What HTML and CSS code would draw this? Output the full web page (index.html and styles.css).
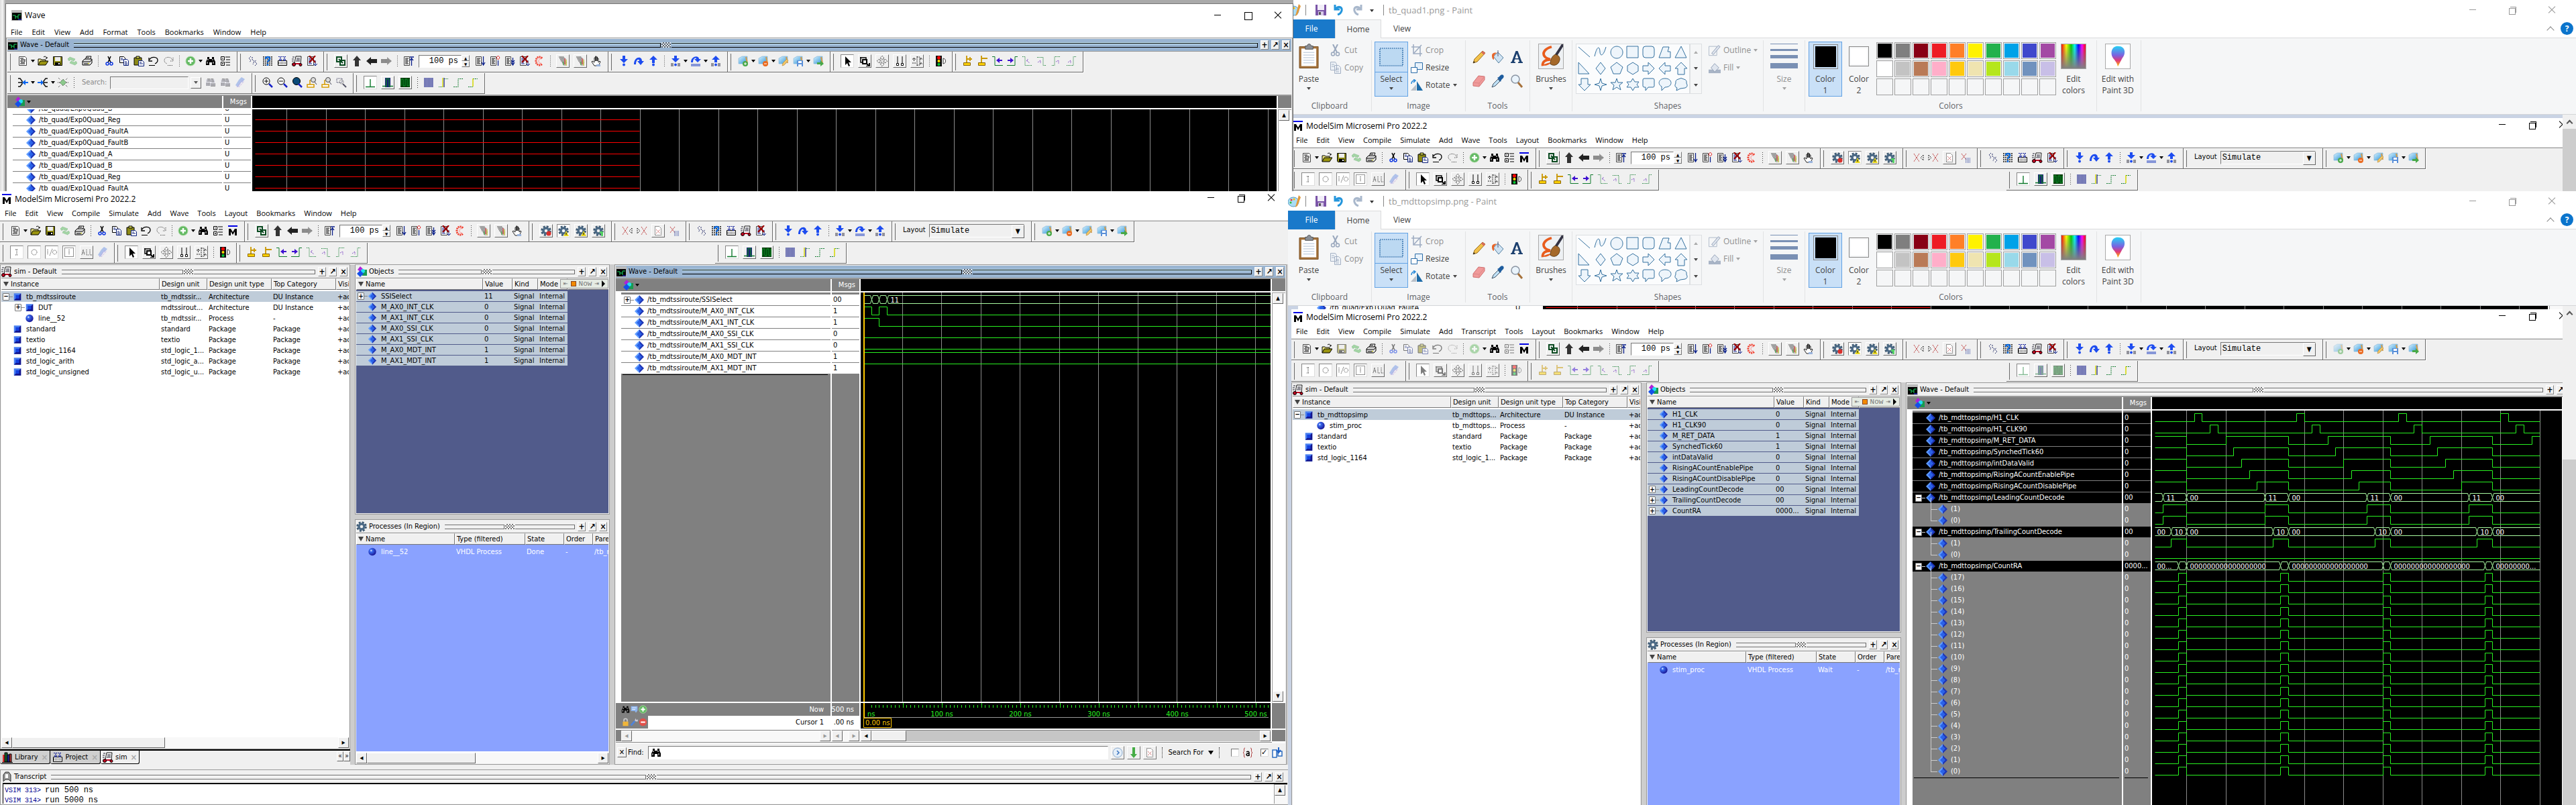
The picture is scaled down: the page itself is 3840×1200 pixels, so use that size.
FILE: index.html
```html
<!DOCTYPE html>
<html lang="en">
<head>
<meta charset="utf-8">
<title>Waveform desktop</title>
<link rel="stylesheet" href="styles.css">
</head>
<body>
<svg class="sprite" aria-hidden="true">
  <defs>
    <linearGradient id="glass" x1="0" y1="0" x2="1" y2="1"><stop offset="0" stop-color="#d8f2ff"/><stop offset="1" stop-color="#2d93d6"/></linearGradient>
    <linearGradient id="rainbow"><stop offset="0" stop-color="#f00"/><stop offset=".2" stop-color="#ff0"/><stop offset=".4" stop-color="#0c0"/><stop offset=".55" stop-color="#0ff"/><stop offset=".7" stop-color="#00f"/><stop offset=".85" stop-color="#f0f"/><stop offset="1" stop-color="#f00"/></linearGradient>
    <linearGradient id="fade" x1="0" y1="0" x2="0" y2="1"><stop offset="0" stop-color="#808080" stop-opacity="0"/><stop offset="1" stop-color="#808080"/></linearGradient>
    <linearGradient id="pin" x1="0" y1="0" x2="0" y2="1"><stop offset="0" stop-color="#25d2f5"/><stop offset=".45" stop-color="#7a62e0"/><stop offset=".7" stop-color="#e03a7a"/><stop offset="1" stop-color="#ffc400"/></linearGradient>
    <radialGradient id="orb" cx=".35" cy=".35" r=".65"><stop offset="0" stop-color="#fff"/><stop offset=".25" stop-color="#3a6cf0"/><stop offset="1" stop-color="#1b1b9a"/></radialGradient>
  </defs>
  <symbol id="i-new" viewBox="0 0 16 16"><path d="M2.5 1.5h9l2 2v11h-11z" fill="#fff" stroke="#444"/><path d="M4 4h5M5 6h7M4 8h4M9 8h3M5 10h6M4 12h7" stroke="#000"/></symbol>
  <symbol id="i-open" viewBox="0 0 16 16"><path d="M1 14V5h4l1 1h6v3" fill="#f8f088" stroke="#000"/><path d="M1 14l3-6h12l-4 6z" fill="#9a9410" stroke="#000"/><path d="M9 2c3-2 4 0 5 2m0-2v2h-2" fill="none" stroke="#000"/></symbol>
  <symbol id="i-save" viewBox="0 0 16 16"><path d="M1.500 1.500h13v13h-12l-1-1z" fill="#8d8a16" stroke="#000"/><path d="M4 2h8v6H4z" fill="#eee"/><path d="M4 10h8v4H4z" fill="#000"/><path d="M9 11h2v2H9z" fill="#fff"/></symbol>
  <symbol id="i-refresh" viewBox="0 0 16 16"><path d="M1 5l3-3 8 3-2 3-5-2-2 2zM15 11l-3 3-8-3 2-3 5 2 2-2z" fill="#a3d5a5" stroke="#7fb884" stroke-dasharray="1 1"/></symbol>
  <symbol id="i-print" viewBox="0 0 16 16"><path d="M5 6l2-5h7l-2 5z" fill="#fff" stroke="#000"/><path d="M1 8l3-3h11v6l-3 3H1z" fill="#ddd" stroke="#000"/><path d="M1 9h11l3-3M7 3h4M3 12h7" fill="none" stroke="#000"/><path d="M9 11h2v1H9z" fill="#dd0"/></symbol>
  <symbol id="i-cut" viewBox="0 0 16 16"><path d="M6 1l4 9M10 1L6 10" stroke="#000" stroke-width="1.500"/><circle cx="5" cy="12" r="2" fill="none" stroke="#0b35e0" stroke-width="1.500"/><circle cx="11" cy="12" r="2" fill="none" stroke="#0b35e0" stroke-width="1.500"/></symbol>
  <symbol id="i-copy" viewBox="0 0 16 16"><path d="M1.500 1.500h6l2 2v7h-8z" fill="#fff" stroke="#000"/><path d="M7.500 5.500h5l2 2v7h-7z" fill="#fff" stroke="#0a1f7a"/><path d="M3 4h3M3 6h4M9 9h3M9 11h4M9 13h4" stroke="#0a1f7a"/></symbol>
  <symbol id="i-paste" viewBox="0 0 16 16"><path d="M1 3h11v11H1z" fill="#8d8a16" stroke="#000"/><path d="M4 1h5v3H4z" fill="#dd5" stroke="#000"/><path d="M7.500 7.500h6l2 2v6h-8z" fill="#fff" stroke="#0a1f7a"/><path d="M9 10h3M9 12h5" stroke="#0a1f7a"/></symbol>
  <symbol id="i-undo" viewBox="0 0 16 16"><path d="M2 6c2-5 12-5 12 1 0 3-2 4-4 5M1 3v5h5" fill="none" stroke="#000" stroke-width="1.300"/><path d="M1 14.500h9" stroke="#000"/></symbol>
  <symbol id="i-redo" viewBox="0 0 16 16"><path d="M14 6C12 1 2 1 2 7c0 3 2 4 4 5M15 3v5h-5M7 14.500h8" fill="none" stroke="#444" stroke-dasharray="1 1"/></symbol>
  <symbol id="i-plus" viewBox="0 0 16 16"><circle cx="8" cy="8" r="7" fill="#63b963" stroke="#a8d8a0"/><path d="M8 4v8M4 8h8" stroke="#fff" stroke-width="2.500"/></symbol>
  <symbol id="i-find" viewBox="0 0 16 16"><path d="M3 2h3v3h4V2h3v3l2 4v5h-5v-4H6v4H1V9l2-4z" fill="#000"/><path d="M4 5v2M11 5v2M3 9v3M12 9v3" stroke="#fff"/></symbol>
  <symbol id="i-tree" viewBox="0 0 16 16"><path d="M1.500 1.500h5v5h-5zM1.500 9.500h5v5h-5z" fill="#fff" stroke="#000"/><path d="M3 4h2M3 12h2M4 11v2M8 2h7M9 6h6M8 10h7M9 14h6" stroke="#000"/></symbol>
  <symbol id="i-m" viewBox="0 0 16 16"><path d="M1 0h14v2H1z" fill="#0000e6"/><path d="M2 15V5h3l3 5 3-5h3v10h-3V9l-3 5-3-5v6z" fill="#000"/></symbol>
  <symbol id="i-link" viewBox="0 0 16 16"><path d="M2 2h7v7H2zM7 7h7v7H7z" fill="none" stroke="#0a4a20" stroke-width="2"/><path d="M5 5l6 6" stroke="#0a4a20" stroke-width="2"/></symbol>
  <symbol id="i-up" viewBox="0 0 16 16"><path d="M8 0l6 7h-3v9H5V7H2z" fill="#333"/></symbol>
  <symbol id="i-left" viewBox="0 0 16 16"><path d="M0 8l7-6v3h9v6H7v3z" fill="#222"/></symbol>
  <symbol id="i-right" viewBox="0 0 16 16"><path d="M16 8L9 2v3H0v6h9v3z" fill="#999"/><path d="M0 6h12M0 8h15M0 10h12" stroke="#666" stroke-dasharray="1 1"/></symbol>
  <symbol id="i-restart" viewBox="0 0 16 16"><path d="M1.500 1.500h8v13h-8z" fill="#fff" stroke="#444"/><path d="M3 4h5M3 6h4M3 8h5M3 10h4M3 12h5" stroke="#000"/><path d="M12.500 15V3M10 2h6M10 7l2.500-3L15 7" fill="none" stroke="#0a1f8a" stroke-width="1.300"/></symbol>
  <symbol id="i-run" viewBox="0 0 16 16"><path d="M1.500 1.500h8v13h-8z" fill="#fff" stroke="#444"/><path d="M3 4h5M3 6h4M3 8h5M3 10h4M3 12h5" stroke="#000"/><path d="M12.500 1v12M10 10l2.500 4L15 10" fill="none" stroke="#0a1f8a" stroke-width="1.300"/></symbol>
  <symbol id="i-cont" viewBox="0 0 16 16"><path d="M1.500 1.500h8v13h-8z" fill="#fff" stroke="#444"/><path d="M3 4h5M3 6h4M3 8h5M3 10h4M3 12h5" stroke="#000"/><path d="M12.500 15V7" stroke="#0a1f8a" stroke-width="1.300"/><path d="M12.500 0l2.500 3-2.500 3L10 3z" fill="#fff" stroke="#d22"/></symbol>
  <symbol id="i-runall" viewBox="0 0 16 16"><path d="M1.500 1.500h8v13h-8z" fill="#fff" stroke="#444"/><path d="M3 4h5M3 6h4M3 8h5M3 10h4M3 12h5" stroke="#000"/><path d="M12.500 3v10M10 7l2.500 3L15 7M10 10l2.500 4L15 10" fill="none" stroke="#0a1f8a" stroke-width="1.300"/></symbol>
  <symbol id="i-break" viewBox="0 0 16 16"><path d="M1.500 1.500h9v13h-9z" fill="#fff" stroke="#444"/><path d="M3 4h5M3 6h4M3 8h5M3 10h4M3 12h5M13 7v8M10 12l3 3 3-3" fill="none" stroke="#0a1f8a"/><path d="M4 0l9 10M13 0L4 10" stroke="#900" stroke-width="2.200"/></symbol>
  <symbol id="i-stop" viewBox="0 0 16 16"><path d="M12 4c-3-4-9-2-9 4s6 8 9 4" fill="none" stroke="#f04030" stroke-width="3" stroke-dasharray="2 1"/><path d="M11 5c-3-1-4 1-4 3s1 4 4 3" fill="none" stroke="#f88"/></symbol>
  <symbol id="i-perf" viewBox="0 0 16 16"><path d="M2 1h7l5 5v9H9z" fill="#bbb"/><path d="M2 2h7M3 4h7M4 6h8M5 8h8M7 10h7M8 12h6" stroke="#555" stroke-dasharray="1 1"/><path d="M11 4v9" stroke="#e33"/><path d="M13 6v9" stroke="#dd2"/><path d="M9 9v5" stroke="#3a3"/></symbol>
  <symbol id="i-hand" viewBox="0 0 16 16"><path d="M5 15l-4-6 1-1 3 2V3h1.500v5V1H8v7-6h1.500v6V4H11v6l2-2 1 1-3 6z" fill="#fff" stroke="#222"/><path d="M8 13h6v3H8z" fill="#9ab4dd"/></symbol>
  <symbol id="i-gear" viewBox="0 0 16 16"><circle cx="8" cy="8" r="6" fill="none" stroke="#3d5871" stroke-width="3.600" stroke-dasharray="2.700 2"/><circle cx="8" cy="8" r="4" fill="none" stroke="#4c6a86" stroke-width="3.500"/></symbol>
  <symbol id="i-gearred" viewBox="0 0 16 16"><use href="#i-gear"/><circle cx="12" cy="12" r="3.500" fill="#d9302c"/></symbol>
  <symbol id="i-gearyellow" viewBox="0 0 16 16"><use href="#i-gear"/><path d="M12 8l4 8H8z" fill="#e8d820"/><path d="M12 11v3" stroke="#000"/></symbol>
  <symbol id="i-geargreen" viewBox="0 0 16 16"><use href="#i-gear"/><path d="M10 9h5v3h-5zM12 12h3v4h-3z" fill="#55d065"/></symbol>
  <symbol id="i-xleft" viewBox="0 0 16 16"><path d="M1 2l8 12M9 2L1 14" stroke="#b33" stroke-dasharray="2 1"/><path d="M15 4v8l-4-4z" fill="none" stroke="#333" stroke-dasharray="2 1"/></symbol>
  <symbol id="i-xright" viewBox="0 0 16 16"><path d="M7 2l8 12M15 2L7 14" stroke="#b33" stroke-dasharray="2 1"/><path d="M1 4v8l4-4z" fill="none" stroke="#333" stroke-dasharray="2 1"/></symbol>
  <symbol id="i-report" viewBox="0 0 16 16"><path d="M3.500 1.500h6l3 3v10h-9z" fill="#fff" stroke="#333" stroke-dasharray="1 1"/><path d="M5 6l3 3 3-3M5 12l3-3 3 3" fill="none" stroke="#b33" stroke-dasharray="1 1"/></symbol>
  <symbol id="i-xgrid" viewBox="0 0 16 16"><path d="M2 2l7 9M9 2l-7 9" stroke="#b33" stroke-dasharray="2 1"/><path d="M8 9h7M8 11h7M8 13h7M8 15h7" stroke="#223a9a" stroke-dasharray="1 1"/></symbol>
  <symbol id="i-compile" viewBox="0 0 16 16"><path d="M5 1L2 4l3 3-2 3M11 15l3-3-3-3 2-3M7 2v4l3 2-2 5" fill="none" stroke="#222a66" stroke-dasharray="2 1"/></symbol>
  <symbol id="i-help" viewBox="0 0 16 16"><path d="M1 2h14M1 5h14M1 8h14M1 11h14M1 14h14" stroke="#111" stroke-dasharray="2 1" stroke-width="1.500"/><path d="M5 5c0-4 7-4 6 0-.5 2-3 2-3 5M8 12v3" fill="none" stroke="#0b66d8" stroke-width="2.500"/></symbol>
  <symbol id="i-project" viewBox="0 0 16 16"><path d="M1.500 7.500h13v7h-13z" fill="#fff" stroke="#000"/><path d="M2 10h12M2 12h12" stroke="#000" stroke-dasharray="1 1"/><path d="M2 1.500h12" stroke="#12209a" stroke-dasharray="2 1"/><path d="M5 2v6M3 5l2 3 2-3M11 2v6M9 5l2 3 2-3" fill="none" stroke="#12209a"/></symbol>
  <symbol id="i-sim" viewBox="0 0 16 16"><path d="M6 1h8l-1 11H4l1-6z" fill="#fff" stroke="#111"/><path d="M7 4h5M7 6h5M6 8h6M1 2h3M0 5h3M0 8h3" stroke="#223" /><path d="M4 12h9" stroke="#c00020" stroke-width="2"/><circle cx="3" cy="13" r="2.500" fill="#c00020" stroke="#000"/><circle cx="13" cy="13.500" r="2" fill="#c00020" stroke="#000"/></symbol>
  <symbol id="i-bdown" viewBox="0 0 16 16"><path d="M6 0h4v5h4l-6 6-6-6h4z" fill="#1d4cf0"/><circle cx="8" cy="13.500" r="2" fill="#1d4cf0"/></symbol>
  <symbol id="i-bover" viewBox="0 0 16 16"><path d="M1 13C1 1 13 0 13 8h3l-5 6-5-6h3c0-4-5-3-5 5z" fill="#1d4cf0"/></symbol>
  <symbol id="i-bup" viewBox="0 0 16 16"><path d="M6 11h4V6h4L8 0 2 6h4z" fill="#1d4cf0"/><circle cx="8" cy="13.500" r="2" fill="#1d4cf0"/></symbol>
  <symbol id="i-cdown" viewBox="0 0 16 16"><path d="M6 0h4v4h4L8 10 2 4h4z" fill="#1d4cf0"/><path d="M2 11v5M4 11v5M12 11v5M14 11v5" stroke="#334"/><circle cx="8" cy="13.500" r="2" fill="#1d4cf0"/></symbol>
  <symbol id="i-cover" viewBox="0 0 16 16"><path d="M1 10C1 0 13-1 13 5h3l-5 5-5-5h3c0-3-5-2-5 5z" fill="#1d4cf0"/><path d="M2 12v4M4 12v4M6 12v4M8 12v4M10 12v4M12 12v4M14 12v4" stroke="#1d3cc0"/></symbol>
  <symbol id="i-cup" viewBox="0 0 16 16"><path d="M6 10h4V6h4L8 0 2 6h4z" fill="#1d4cf0"/><path d="M2 11v5M4 11v5M12 11v5M14 11v5" stroke="#334"/><circle cx="8" cy="13.500" r="2" fill="#1d4cf0"/></symbol>
  <symbol id="i-boxes" viewBox="0 0 16 16"><path d="M1 4l5-3h8v7l-3 4H1z" fill="url(#glass)" stroke="#7fb4d8" stroke-width=".6"/><path d="M12 2l2 9" stroke="#d59b4a" stroke-width="2"/></symbol>
  <symbol id="i-vadd" viewBox="0 0 16 16"><use href="#i-boxes"/><circle cx="11" cy="12" r="4" fill="#4aa84a"/><path d="M11 10v4M9 12h4" stroke="#fff"/></symbol>
  <symbol id="i-vdel" viewBox="0 0 16 16"><use href="#i-boxes"/><circle cx="11" cy="12" r="4" fill="#ea6a20"/><path d="M9 12h4" stroke="#fff"/></symbol>
  <symbol id="i-vedit" viewBox="0 0 16 16"><use href="#i-boxes"/><path d="M6 15l1-4 6-6 2 2-6 7z" fill="#f3c669" stroke="#b5842c" stroke-width=".6"/></symbol>
  <symbol id="i-vsave" viewBox="0 0 16 16"><use href="#i-boxes"/><path d="M6 7h9v9H6z" fill="#5a8fd8"/><path d="M8 8h5v3H8zM8 13h5v3H8z" fill="#fff"/></symbol>
  <symbol id="i-vgo" viewBox="0 0 16 16"><use href="#i-boxes"/><path d="M6 10h5V7l5 5-5 4v-3H6z" fill="#47a847"/></symbol>
  <symbol id="i-in" viewBox="0 0 16 16"><path d="M6 4h4M8 4v8M6 12h4" stroke="#333" stroke-dasharray="1 1" fill="none"/></symbol>
  <symbol id="i-out" viewBox="0 0 16 16"><circle cx="8" cy="8" r="4" fill="none" stroke="#333" stroke-dasharray="1 1"/></symbol>
  <symbol id="i-io" viewBox="0 0 16 16"><path d="M2 4v8M9 3l-4 10" stroke="#333" stroke-dasharray="1 1"/><circle cx="12.500" cy="8" r="3" fill="none" stroke="#333" stroke-dasharray="1 1"/></symbol>
  <symbol id="i-int" viewBox="0 0 16 16"><path d="M1.500 1.500h13v13h-13zM8 4v8" fill="none" stroke="#222" stroke-dasharray="1 1"/></symbol>
  <symbol id="i-all" viewBox="0 0 16 16"><path d="M1 12l2-8 2 8M2 9h3M8 4v8h3M13 4v8h3" fill="none" stroke="#333" stroke-dasharray="1 1"/></symbol>
  <symbol id="i-clean" viewBox="0 0 16 16"><path d="M1 12l5-8 4 3-5 8zM6 4l4-4 5 3-4 5" fill="#9fb6e8" opacity=".8"/><path d="M3 15l9-11M6 15l8-9" stroke="#c39ae0" stroke-dasharray="1 1"/></symbol>
  <symbol id="i-arrow" viewBox="0 0 16 16"><path d="M5 1v13l3-3 2 5 2-1-2-5h4z" fill="#000"/></symbol>
  <symbol id="i-zoommode" viewBox="0 0 16 16"><path d="M1 3h9v2M2 2v8h2" fill="none" stroke="#000" stroke-width="1.500"/><path d="M5 6h6v6H5zM10 11l5 5M15 11v5h-5" fill="none" stroke="#000" stroke-width="2"/></symbol>
  <symbol id="i-pan" viewBox="0 0 16 16"><path d="M8 0l3 4H9v3h3V5l4 3-4 3V9H9v3h2l-3 4-3-4h2V9H4v2L0 8l4-3v2h3V4H5z" fill="#fff" stroke="#222" stroke-dasharray="1 1"/></symbol>
  <symbol id="i-twocur" viewBox="0 0 16 16"><path d="M5 1v10M12 1v10" stroke="#000"/><path d="M3.500 11.500h3v3h-3zM10.500 11.500h3v3h-3z" fill="#fff" stroke="#000"/></symbol>
  <symbol id="i-edit" viewBox="0 0 16 16"><path d="M1 5h5M3.500 3v5M1 11h5M8 1v14M8 2h4v12H8M14 3v3M12 5h4M14 10v3M12 12h4" stroke="#222" fill="none" stroke-dasharray="2 1"/></symbol>
  <symbol id="i-traffic" viewBox="0 0 16 16"><path d="M1 0h9v16H1z" fill="#111"/><circle cx="5.500" cy="3" r="2.500" fill="#f00"/><circle cx="5.500" cy="8" r="2" fill="#fd0"/><circle cx="5.500" cy="13" r="2" fill="#0c3"/><path d="M12 4v8c5-1 5-7 0-8z" fill="#fff" stroke="#333"/></symbol>
  <symbol id="i-curadd" viewBox="0 0 16 16"><path d="M6 0v11M6 5h8M11 2v6" stroke="#c99700" stroke-width="1.800"/><path d="M1.500 10.500h10v4h-10z" fill="#fbd000" stroke="#8a6500"/></symbol>
  <symbol id="i-curdel" viewBox="0 0 16 16"><path d="M6 0v11M6 4h9" stroke="#c99700" stroke-width="1.800"/><path d="M1.500 10.500h10v4h-10z" fill="#fbd000" stroke="#8a6500"/></symbol>
  <symbol id="i-prev" viewBox="0 0 16 16"><path d="M0 1.500h4v13h12" fill="none" stroke="#107a2e"/><path d="M6 7l5-4v3h4v2h-4v3z" fill="#3d0fd0"/></symbol>
  <symbol id="i-next" viewBox="0 0 16 16"><path d="M0 14.500h12v-13h4" fill="none" stroke="#107a2e"/><path d="M10 7L5 3v3H1v2h4v3z" fill="#3d0fd0"/></symbol>
  <symbol id="i-fallp" viewBox="0 0 16 16"><path d="M1 1.500h4v13h10" fill="none" stroke="#107a2e" stroke-dasharray="1 1"/><path d="M7 7l5 4M9 5l-1 4" stroke="#62b" stroke-dasharray="1 1"/></symbol>
  <symbol id="i-falln" viewBox="0 0 16 16"><path d="M1 2.500h9v12h5" fill="none" stroke="#107a2e" stroke-dasharray="1 1"/><path d="M2 10l4-3v5" stroke="#62b" fill="none" stroke-dasharray="1 1"/></symbol>
  <symbol id="i-risep" viewBox="0 0 16 16"><path d="M1 14.500h4v-13h9" fill="none" stroke="#107a2e" stroke-dasharray="1 1"/><path d="M7 9l4-2v5" stroke="#62b" fill="none" stroke-dasharray="1 1"/></symbol>
  <symbol id="i-risen" viewBox="0 0 16 16"><path d="M1 14.500h10v-13h4" fill="none" stroke="#107a2e" stroke-dasharray="1 1"/><path d="M3 10l4-3v5" stroke="#62b" fill="none" stroke-dasharray="1 1"/></symbol>
  <symbol id="i-w1" viewBox="0 0 16 16"><path d="M1 14.500h14M8 14V3" stroke="#107a2e" stroke-width="1.400"/></symbol>
  <symbol id="i-w2" viewBox="0 0 16 16"><path d="M4 1h8v14H4z" fill="#182078"/><path d="M0 13.500h6v-11h4v11h6" fill="none" stroke="#107a2e" stroke-width="1.400"/></symbol>
  <symbol id="i-w3" viewBox="0 0 16 16"><path d="M1 1h14v14H1z" fill="#023d0a"/><path d="M2 13V3h3v10h3V3h3v10h3V3" fill="none" stroke="#0a9a2a"/></symbol>
  <symbol id="i-w4" viewBox="0 0 16 16"><path d="M1 1h14v14H1z" fill="#8c90c4"/><path d="M1 2h14M1 4h14M1 6h14M1 8h14M1 10h14M1 12h14M1 14h14" stroke="#3d4292" stroke-dasharray="1 1"/></symbol>
  <symbol id="i-w5" viewBox="0 0 16 16"><path d="M1 14.500h5M10 2.500h5" stroke="#107a2e" stroke-dasharray="1 1"/><path d="M6 1h2v14H6z" fill="#dfe048"/><path d="M8 1h2v14H8z" fill="#6a70b0"/></symbol>
  <symbol id="i-w6" viewBox="0 0 16 16"><path d="M1 14.500h7v-12h7" fill="none" stroke="#107a2e" stroke-dasharray="2 1"/></symbol>
  <symbol id="i-w7" viewBox="0 0 16 16"><path d="M1 14.500h7M8 2.500h7" stroke="#107a2e" stroke-dasharray="2 1"/><path d="M8 2v12" stroke="#d6d800" stroke-width="1.500"/></symbol>
  <symbol id="i-drv" viewBox="0 0 16 16"><path d="M1 2h3l3 4v4l-3 4H1M1 8h6" fill="none" stroke="#111" stroke-width="1.500"/><path d="M7 8l5-4v3h4v2h-4v3z" fill="#0b66f0"/></symbol>
  <symbol id="i-rdr" viewBox="0 0 16 16"><path d="M15 2h-3L9 6v4l3 4h3M9 8h6" fill="none" stroke="#111" stroke-width="1.500"/><path d="M9 8L5 4v3H0v2h5v3z" fill="#0b66f0"/></symbol>
  <symbol id="i-expand" viewBox="0 0 16 16"><path d="M8 3l5 5-5 5-5-5z" fill="#8cc98c" stroke="#444" stroke-dasharray="1 1"/><path d="M1 1l3 3M12 4l3-3M1 15l3-3M12 12l3 3M0 8h3M13 8h3" stroke="#333" stroke-dasharray="1 1"/></symbol>
  <symbol id="i-findgray" viewBox="0 0 16 16"><path d="M3 2h4l2 5H2zM8 2h4l2 6H9zM1 8h6v5H1zM8 9h7v5H8z" fill="#9a9a9a"/><path d="M1 4h14M1 6h14M1 8h14M1 10h14M1 12h14" stroke="#dcdcf4" stroke-dasharray="1 1"/></symbol>
  <symbol id="i-zin" viewBox="0 0 16 16"><circle cx="6" cy="6" r="5" fill="#fff" stroke="#000"/><path d="M6 3v6M3 6h6" stroke="#000"/><path d="M10 10l5 5" stroke="#1722c8" stroke-width="2.500"/></symbol>
  <symbol id="i-zout" viewBox="0 0 16 16"><circle cx="6" cy="6" r="5" fill="#fff" stroke="#000"/><path d="M3 6h6" stroke="#000"/><path d="M10 10l5 5" stroke="#1722c8" stroke-width="2.500"/></symbol>
  <symbol id="i-zfull" viewBox="0 0 16 16"><circle cx="7" cy="6" r="5.500" fill="#0b4a78" stroke="#000"/><path d="M10 10l5 5" stroke="#1722c8" stroke-width="2.500"/></symbol>
  <symbol id="i-zcur" viewBox="0 0 16 16"><circle cx="10" cy="4" r="3.500" fill="#ddd" stroke="#444"/><path d="M12 7l3 4" stroke="#445"/><path d="M5 4v8" stroke="#d59a00" stroke-width="1.500"/><path d="M1 11h10v4H1z" fill="#fff" stroke="#d59a00" stroke-width="1.500"/></symbol>
  <symbol id="i-zsel" viewBox="0 0 16 16"><path d="M1 2h8v6H1z" fill="none" stroke="#335" stroke-dasharray="1 1"/><circle cx="8" cy="7" r="3" fill="none" stroke="#444" stroke-dasharray="1 1"/><path d="M10 10l5 5" stroke="#556" stroke-width="2"/></symbol>
  <symbol id="i-wave" viewBox="0 0 16 16"><path d="M0 0h16v16H0z" fill="#bbb"/><path d="M1 4h14v11H1z" fill="#000"/><path d="M2 8h4v5M10 13V7h4M6 10h4" stroke="#18d860" fill="none"/><path d="M10 14h5" stroke="#33f"/></symbol>
  <symbol id="i-objects" viewBox="0 0 16 16"><path d="M6 0l6 6-6 2-4-3z" fill="#b020d8"/><path d="M9 5h7v9H9z" fill="#1a9a50"/><circle cx="10" cy="7" r="3" fill="#20e0f0"/><path d="M6 6l5 5-5 5-5-5z" fill="#1450e8"/></symbol>
  <symbol id="i-sig" viewBox="0 0 16 16"><path d="M8 1v14L1 8z" fill="#5e9bff"/><path d="M8 1v14l7-7z" fill="#1e34b4"/><path d="M8 4l4 4-4 4-4-4z" fill="#2a62e8"/></symbol>
  <symbol id="i-du" viewBox="0 0 16 16"><path d="M2 2h12v12H2z" fill="#4a80f0"/><path d="M14 2v12H2z" fill="#14148a"/><path d="M5 5h6v6H5z" fill="#1440e0"/></symbol>
  <symbol id="i-proc" viewBox="0 0 16 16"><circle cx="8" cy="8" r="6.500" fill="url(#orb)"/></symbol>
  <symbol id="i-lib" viewBox="0 0 16 16"><path d="M1 4h3v11H1z" fill="#d33"/><path d="M4 1h4v14H4z" fill="#155a2a" stroke="#000"/><path d="M8 4h3v11H8z" fill="#22a" stroke="#000"/><path d="M11 3h3v12h-3z" fill="#a33" stroke="#000"/><path d="M0 15.500h16" stroke="#000"/></symbol>
  <symbol id="i-trans" viewBox="0 0 16 16"><path d="M3 15V5l3-4h5l3 4v10l-3-3H6z" fill="#999" stroke="#333"/><path d="M6 4h4v6H6z" fill="#fff"/></symbol>
  <symbol id="i-lock" viewBox="0 0 16 16"><path d="M5 7V4c0-3 6-3 6 0v3" fill="none" stroke="#ccc" stroke-width="2"/><path d="M3 7h10v8H3z" fill="#f0b63a"/></symbol>
  <symbol id="i-wrench" viewBox="0 0 16 16"><path d="M2 14l7-8" stroke="#4f83d8" stroke-width="3.500"/><path d="M9 6l1-5 2 3 3-1-1 4z" fill="#ccd"/></symbol>
  <symbol id="i-minus" viewBox="0 0 16 16"><circle cx="8" cy="8" r="7" fill="#e2504a"/><path d="M4 8h8" stroke="#fff" stroke-width="2.500"/></symbol>
  <symbol id="i-note" viewBox="0 0 16 16"><path d="M2 2h12v8l-3 4-2-3H2z" fill="#8fb6ee"/><path d="M4 5h8M4 8h6" stroke="#fff"/></symbol>
  <symbol id="i-godown" viewBox="0 0 16 16"><path d="M6 0h4v10h3l-5 6-5-6h3z" fill="#45ac45"/></symbol>
  <symbol id="i-disc" viewBox="0 0 16 16"><circle cx="8" cy="8" r="7" fill="#e4eef8" stroke="#88a8cc"/><path d="M7 5l3 3-3 3" fill="none" stroke="#3b74c0" stroke-width="1.500"/></symbol>
  <symbol id="i-case" viewBox="0 0 16 16"><path d="M4 1C1 1 4 7 1 8c3 1 0 7 3 7M12 1c3 0 0 6 3 7-3 1 0 7-3 7" fill="none" stroke="#a33"/><path d="M6 7c3-2 4 0 4 1v5M10 9c-3 0-4 1-4 2s3 3 4 0" fill="none" stroke="#000" stroke-width="1.500"/></symbol>
  <symbol id="i-wrap" viewBox="0 0 16 16"><path d="M1 4h6v11H1zM9 6h6v7H9z" fill="#fff" stroke="#2d6cc0" stroke-width="1.500"/><path d="M10 0v6M7 4l3 4 3-4" fill="none" stroke="#1d62c8" stroke-width="2"/></symbol>
  <symbol id="i-palette" viewBox="0 0 20 20"><ellipse cx="8" cy="11" rx="8" ry="7" fill="#a9dcf5" stroke="#5a9cc4"/><circle cx="5" cy="8" r="1.500" fill="#e33"/><circle cx="9" cy="7" r="1.500" fill="#fb0"/><circle cx="4" cy="12" r="1.500" fill="#3b3"/><path d="M16 1l3 3-5 13-3 2 1-4z" fill="#e29a3c"/></symbol>
  <symbol id="i-psave" viewBox="0 0 16 16"><path d="M0 0h16v16H0z" fill="#7b55a8"/><path d="M3 0h10v8H3z" fill="#f2eef8"/><path d="M4 10h8v6H4z" fill="#d8cce8"/><path d="M5 11h3v4H5z" fill="#555"/></symbol>
  <symbol id="i-pundo" viewBox="0 0 16 16"><path d="M2 0v7h7M3 6c5-5 10-2 9 3-1 3-3 5-6 6" fill="none" stroke="#2496dc" stroke-width="3"/></symbol>
  <symbol id="i-predo" viewBox="0 0 16 16"><path d="M14 0v7H7M13 6C8 1 3 4 4 9c1 3 3 5 6 6" fill="none" stroke="#a9b8cc" stroke-width="3"/></symbol>
  <symbol id="i-clipboard" viewBox="0 0 32 38"><path d="M1 4h29v33H1z" fill="#a3713a" stroke="#7d5426"/><path d="M4 7h23v27H4z" fill="#fff"/><path d="M7 13h17M7 17h17M7 21h17M7 25h17M7 29h17" stroke="#aebfd2"/><path d="M10 3h3c0-4 6-4 6 0h3v5H10z" fill="#8a8f96" stroke="#555"/></symbol>
  <symbol id="i-pcut" viewBox="0 0 16 18"><path d="M4 0l6 12M11 0L5 12" stroke="#9aa8bd" stroke-width="2"/><circle cx="4" cy="14.500" r="2.500" fill="none" stroke="#9aa8bd" stroke-width="1.500"/><circle cx="11" cy="14.500" r="2.500" fill="none" stroke="#9aa8bd" stroke-width="1.500"/></symbol>
  <symbol id="i-pcopy" viewBox="0 0 16 18"><path d="M.5.5h7l2 3v9h-9zM6.500 5.500h6l3 3v9h-9z" fill="#eef2f7" stroke="#a4b1c4"/><path d="M2 4h4M2 7h4M8 10h5M8 12h5M8 15h5" stroke="#a4b1c4"/></symbol>
  <symbol id="i-select" viewBox="0 0 36 28"><path d="M1 1h34v26H1z" fill="#bcd9f2" stroke="#1a5c9c" stroke-width="1.200" stroke-dasharray="2 1"/></symbol>
  <symbol id="i-crop" viewBox="0 0 16 18"><path d="M3 0v14h13M0 4h13v14M4 13L15 1" fill="none" stroke="#9fadc2" stroke-width="1.600"/></symbol>
  <symbol id="i-resize" viewBox="0 0 18 16"><path d="M6.500.5h11v10h-11z" fill="#e8f2fb" stroke="#2a6ca8"/><path d="M.5 7.500h9v8h-9z" fill="#fff" stroke="#2a6ca8"/></symbol>
  <symbol id="i-rotate" viewBox="0 0 18 18"><path d="M0 17h8V8z" fill="#b8bfc8"/><path d="M9 3l9 14H9z" fill="#1d6ba8"/><path d="M1 7c0-4 2-5 5-5M4 0l3 2-3 3" fill="none" stroke="#2a8ad8" stroke-width="1.500"/></symbol>
  <symbol id="i-pencil" viewBox="0 0 20 20"><path d="M1 19l2-6L15 1l4 3L7 17z" fill="#f2c14a" stroke="#9a6f20"/><path d="M15 1l4 3-2 3-4-4z" fill="#d86a5a"/><path d="M1 19l1-3 2 2z" fill="#222"/></symbol>
  <symbol id="i-bucket" viewBox="0 0 20 20"><path d="M3 9l7-6 8 8-7 8z" fill="#cfe2f2" stroke="#55809f"/><path d="M10 0v9" stroke="#557"/><path d="M1 8c0-5 6-5 8-4-5 1-5 5-5 10-2 0-3-3-3-6z" fill="#e8662a"/></symbol>
  <symbol id="i-text" viewBox="0 0 20 20"><path d="M1 19v-1.500l1.500-.5L8.500 1h3l6 16 1.500.5V19h-7v-1.500l2-.5-1-3.500H7L6 17l2 .5V19zM7.500 12h5L10 5z" fill="#1b3f6e"/></symbol>
  <symbol id="i-eraser" viewBox="0 0 20 20"><path d="M1 12L9 2l9 1v5l-8 10-9-1z" fill="#f09a9a" stroke="#d07070"/><path d="M1 12l9 1 8-10M10 13v5" fill="none" stroke="#d88"/></symbol>
  <symbol id="i-picker" viewBox="0 0 20 20"><path d="M1 19l2-5 7-7 3 3-7 7z" fill="#bfe0f5" stroke="#456"/><path d="M9 5l2-1 3-3c3-2 6 1 4 4l-3 3-1 3z" fill="#1d5c9e"/></symbol>
  <symbol id="i-loupe" viewBox="0 0 20 20"><circle cx="8" cy="7" r="6" fill="#eaf4fc" stroke="#8a95a3" stroke-width="1.500"/><path d="M12 12l6 7" stroke="#a6713a" stroke-width="3"/></symbol>
  <symbol id="i-brush" viewBox="0 0 38 38"><path d="M0 0h38v38H0z" fill="#eef1f4"/><path d="M20 4C9 7 5 14 9 19c2 3 6 4 9 5-7 0-13 3-12 10" fill="none" stroke="#e85c1d" stroke-width="4"/><path d="M6 33c5 2 12-1 15-6-5 3-11 3-15 6z" fill="#e85c1d"/><path d="M38 0L27 17" stroke="#334" stroke-width="4"/><path d="M26 16c8 2 8 8 5 13-4 5-9 5-13 2 0-8 4-14 8-15z" fill="#a5692a" stroke="#5d3a14"/></symbol>
  <symbol id="i-outline" viewBox="0 0 20 18"><path d="M.5 2.500h13v15H.5z" fill="none" stroke="#a8b4c6"/><path d="M5 14L16 1l3 2L8 16z" fill="#dfe5ee" stroke="#8c9bb2"/></symbol>
  <symbol id="i-fill" viewBox="0 0 20 18"><path d="M0 12h20v6H0z" fill="#a8b4c6"/><path d="M4 9l6-7 7 7-7 7z" fill="#dfe5ee" stroke="#8c9bb2"/></symbol>
  <symbol id="i-edcol" viewBox="0 0 38 38"><path d="M0 0h38v38H0z" fill="url(#rainbow)"/><path d="M0 0h38v38H0z" fill="url(#fade)"/></symbol>
  <symbol id="i-paint3d" viewBox="0 0 38 38"><path d="M19 3c14 0 12 14 7 19l-7 13c-1-6-5-10-8-14C7 14 9 3 19 3z" fill="url(#pin)"/></symbol>
</svg>

<template id="paint-frame">
  <header class="paint-title">
    <svg class="ic20"><use href="#i-palette"/></svg><i class="bar"></i>
    <button class="flat" aria-label="Save"><svg class="icon"><use href="#i-psave"/></svg></button>
    <button class="flat" aria-label="Undo"><svg class="icon"><use href="#i-pundo"/></svg></button>
    <button class="flat" aria-label="Redo"><svg class="icon"><use href="#i-predo"/></svg></button>
    <span class="drop"></span><i class="bar"></i><h2></h2>
    <div class="controls paint-controls"><button aria-label="Minimize" class="min"></button><button aria-label="Restore" class="max"></button><button aria-label="Close" class="close"></button></div>
  </header>
  <nav class="paint-tabs"><button class="file">File</button><button class="on">Home</button><button>View</button>
    <span class="fold"></span><button class="qm" aria-label="Help">?</button></nav>
  <div class="ribbon">
    <section class="rg clip"><div class="rb">
      <button class="big"><svg class="paste"><use href="#i-clipboard"/></svg>Paste<i class="drop"></i></button>
      <div class="small"><button class="off"><svg class="ic18"><use href="#i-pcut"/></svg>Cut</button><button class="off"><svg class="ic18"><use href="#i-pcopy"/></svg>Copy</button></div></div><h3>Clipboard</h3></section>
    <section class="rg image"><div class="rb">
      <button class="big sel"><span class="half"><svg class="selbox"><use href="#i-select"/></svg></span>Select<i class="drop"></i></button>
      <div class="small"><button class="off"><svg class="ic18"><use href="#i-crop"/></svg>Crop</button><button><svg class="ic18"><use href="#i-resize"/></svg>Resize</button><button><svg class="ic18"><use href="#i-rotate"/></svg>Rotate<i class="drop"></i></button></div></div><h3>Image</h3></section>
    <section class="rg tools"><div class="rb toolgrid">
      <button aria-label="Pencil"><svg class="ic20"><use href="#i-pencil"/></svg></button><button aria-label="Fill"><svg class="ic20"><use href="#i-bucket"/></svg></button><button aria-label="Text"><svg class="ic20"><use href="#i-text"/></svg></button>
      <button aria-label="Eraser"><svg class="ic20"><use href="#i-eraser"/></svg></button><button aria-label="Picker"><svg class="ic20"><use href="#i-picker"/></svg></button><button aria-label="Magnifier"><svg class="ic20"><use href="#i-loupe"/></svg></button></div><h3>Tools</h3></section>
    <section class="rg brushes"><div class="rb"><button class="big"><svg class="tile"><use href="#i-brush"/></svg>Brushes<i class="drop"></i></button></div></section>
    <section class="rg shapes"><div class="rb"><div class="gallery"></div><div class="gscroll"><i class="up"></i><i class="drop"></i><i class="drop more"></i></div>
      <div class="small"><button class="off"><svg class="ic18"><use href="#i-outline"/></svg>Outline<i class="drop"></i></button><button class="off"><svg class="ic18"><use href="#i-fill"/></svg>Fill<i class="drop"></i></button></div></div><h3>Shapes</h3></section>
    <section class="rg size"><div class="rb"><button class="big off"><span class="lines"><i></i><i></i><i></i><i></i></span>Size<i class="drop"></i></button></div></section>
    <section class="rg colors"><div class="rb"><button class="big c1"><span class="sw"></span>Color<br>1</button><button class="big c2"><span class="sw"></span>Color<br>2</button><div class="palette"></div>
      <button class="big ec"><svg class="tile"><use href="#i-edcol"/></svg>Edit<br>colors</button></div><h3>Colors</h3></section>
    <section class="rg p3d"><div class="rb"><button class="big"><svg class="tile"><use href="#i-paint3d"/></svg>Edit with<br>Paint 3D</button></div></section>
  </div>
</template>

<main class="desktop">
  <section class="slot top-left">
    <div class="wave-window">
      <header class="wtitle"><svg class="icon"><use href="#i-wave"/></svg><span>Wave</span><div class="controls"><button aria-label="Minimize" class="min"></button><button aria-label="Maximize" class="max single"></button><button aria-label="Close" class="close"></button></div></header>
      <nav class="menu" data-menu="File,Edit,View,Add,Format,Tools,Bookmarks,Window,Help"></nav>
      <div class="pane active">
        <div class="ptitle" data-icon="wave" data-title="Wave - Default"></div>
        <div class="toolbars" data-set="wave"></div>
        <div class="wave quad" data-wave="quad"></div>
      </div>
    </div>
  </section>

  <section class="slot paint top-right" data-title="tb_quad1.png - Paint">
    <div class="canvas"><div class="view"><div class="modelsim">
      <header class="wtitle"><svg class="icon"><use href="#i-m"/></svg><span>ModelSim Microsemi Pro 2022.2</span><div class="controls"><button aria-label="Minimize" class="min"></button><button aria-label="Restore" class="max"></button><button aria-label="Close" class="close"></button></div></header>
      <nav class="menu" data-menu="File,Edit,View,Compile,Simulate,Add,Wave,Tools,Layout,Bookmarks,Window,Help"></nav>
      <div class="toolbars" data-set="modelsim"></div>
    </div></div><div class="pscroll"><i></i><b></b></div></div>
  </section>

  <section class="slot bottom-left">
    <div class="modelsim full">
      <header class="wtitle"><svg class="icon"><use href="#i-m"/></svg><span>ModelSim Microsemi Pro 2022.2</span><div class="controls"><button aria-label="Minimize" class="min"></button><button aria-label="Restore" class="max"></button><button aria-label="Close" class="close"></button></div></header>
      <nav class="menu" data-menu="File,Edit,View,Compile,Simulate,Add,Wave,Tools,Layout,Bookmarks,Window,Help"></nav>
      <div class="toolbars" data-set="modelsim"></div>
      <div class="panes">
        <div class="simcol">
          <div class="pane simpane">
            <div class="ptitle" data-icon="sim" data-title="sim - Default"></div>
            <div class="body"><table class="grid sim" data-table="route-sim"></table></div>
            <div class="hs"><button>◂</button><span class="track"><i style="width:47%"></i></span><button>▸</button></div>
          </div>
          <div class="tabs"><button><svg class="icon"><use href="#i-lib"/></svg>Library<b>×</b></button><button><svg class="icon"><use href="#i-project"/></svg>Project<b>×</b></button><button class="on"><svg class="icon"><use href="#i-sim"/></svg>sim<b>×</b></button><span class="tabnav"><button>«</button><button>»</button></span></div>
        </div>
        <div class="midcol">
          <div class="pane objpane"><div class="ptitle" data-icon="objects" data-title="Objects"></div><div class="body"><div class="nowbox"><span>⇤</span><em></em><span>Now</span><span>⇥</span><b></b></div><table class="grid obj" data-table="route-obj"></table></div></div>
          <div class="pane procpane"><div class="ptitle" data-icon="gear" data-title="Processes (In Region)"></div><div class="body"><table class="grid proc" data-table="route-proc"></table></div>
            <div class="hs"><button>◂</button><span class="track"><i style="width:47%"></i></span><button>▸</button></div></div>
        </div>
        <div class="pane wavepane active">
          <div class="ptitle" data-icon="wave" data-title="Wave - Default"></div>
          <div class="wave white" data-wave="route"></div>
          <form class="findbar" onsubmit="return false"><button type="button" class="x" aria-label="Close find">✕</button><label for="find">Find:</label><span class="findbox"><svg class="icon"><use href="#i-find"/></svg><input id="find" type="text"></span>
            <button type="button" class="box" aria-label="Go"><svg class="icon"><use href="#i-disc"/></svg></button><button type="button" class="box" aria-label="Find next"><svg class="icon"><use href="#i-godown"/></svg></button><button type="button" class="box" aria-label="Find all"><svg class="icon"><use href="#i-report"/></svg></button>
            <i class="vsep"></i><button type="button" class="searchfor">Search For <i class="drop"></i></button><i class="vsep"></i>
            <input type="checkbox" id="case"><label for="case" aria-label="Match case"><svg class="icon"><use href="#i-case"/></svg></label><input type="checkbox" id="wrap" checked><label for="wrap" aria-label="Wrap"><svg class="icon"><use href="#i-wrap"/></svg></label></form>
        </div>
      </div>
      <div class="pane transcript"><div class="ptitle" data-icon="trans" data-title="Transcript"></div>
        <div class="log"><pre><b>VSIM 313&gt; </b>run 500 ns
<b>VSIM 314&gt; </b>run 5000 ns</pre><div class="vs"><button>▲</button></div></div></div>
    </div>
  </section>

  <section class="slot paint bottom-right" data-title="tb_mdttopsimp.png - Paint">
    <div class="canvas"><div class="view">
      <div class="sliver"><div class="wave bare" data-wave="sliver"></div></div>
      <div class="modelsim full">
      <header class="wtitle"><svg class="icon"><use href="#i-m"/></svg><span>ModelSim Microsemi Pro 2022.2</span><div class="controls"><button aria-label="Minimize" class="min"></button><button aria-label="Restore" class="max"></button><button aria-label="Close" class="close"></button></div></header>
      <nav class="menu" data-menu="File,Edit,View,Compile,Simulate,Add,Transcript,Tools,Layout,Bookmarks,Window,Help"></nav>
      <div class="toolbars" data-set="modelsim" data-disabled="save cut copy paste undo redo plus tree arrow zoommode twocur edit traffic curadd curdel prev next w1 w2 w3 vadd"></div>
      <div class="panes">
        <div class="simcol"><div class="pane simpane">
            <div class="ptitle" data-icon="sim" data-title="sim - Default"></div>
            <div class="body"><table class="grid sim" data-table="top-sim"></table></div></div></div>
        <div class="midcol">
          <div class="pane objpane"><div class="ptitle" data-icon="objects" data-title="Objects"></div><div class="body"><div class="nowbox"><span>⇤</span><em></em><span>Now</span><span>⇥</span><b></b></div><table class="grid obj" data-table="top-obj"></table></div></div>
          <div class="pane procpane"><div class="ptitle" data-icon="gear" data-title="Processes (In Region)"></div><div class="body"><table class="grid proc" data-table="top-proc"></table></div></div>
        </div>
        <div class="pane wavepane">
          <div class="ptitle" data-icon="wave" data-title="Wave - Default"></div>
          <div class="wave black" data-wave="top"></div>
        </div>
      </div></div>
    </div><div class="pscroll low"><i></i><b></b></div></div>
  </section>
</main>
<script src="script.js"></script>
</body>
</html>
```
FILE: styles.css
```css
* { box-sizing: border-box; }
:root {
  --ui: "DejaVu Sans Condensed", "Open Sans", sans-serif;
  --seg: "Open Sans", "Noto Sans", sans-serif;
  --mono: "Liberation Mono", monospace;
  --face: #f0f0f0;
  --line: #696969;
}
body { margin: 0; background: #fff; font: 11px/16px var(--ui); color: #000; overflow: hidden; }
button { font: inherit; color: inherit; background: none; border: 0; padding: 0; margin: 0; }
h2, h3, ul, pre { margin: 0; padding: 0; font: inherit; list-style: none; }
.sprite { position: absolute; width: 0; height: 0; }
svg { display: block; flex: none; }
.icon { width: 16px; height: 16px; }
.ic20 { width: 20px; height: 20px; }
.ic18 { width: 18px; height: 18px; }
.drop { display: inline-block; width: 0; height: 0; border: 3px solid transparent; border-top: 4px solid currentColor; border-bottom: 0; }

.desktop { display: grid; grid-template-columns: 1fr 1fr; grid-template-rows: 285px 1fr; height: 100vh; }
.slot { min-width: 0; min-height: 0; overflow: hidden; display: flex; flex-direction: column; }
.top-left { margin-right: -8px; padding: 5px 0 0 8px; background: linear-gradient(90deg, #ddd, #f4f4f4 4px, #aaa 8px); z-index: 1; }

/* window chrome */
.wave-window { border: 1px solid #777; border-bottom: 0; background: #fff; }
.wave-window .wtitle { height: 32px; padding: 2px 0 0 8px; }
.wave-window .menu { height: 18px; }
.wtitle { display: flex; align-items: center; gap: 4px; height: 23px; padding: 0 0 0 2px; font: 12px/16px var(--seg); background: #fff; }
.menu { display: flex; height: 20px; font: 11px/20px var(--seg); background: #fff; }
.menu button { padding: 0 7px; }
.controls { margin-left: auto; display: flex; }
.controls button { position: relative; width: 45px; height: 20px; }
.controls button::before, .controls button::after { content: ""; position: absolute; }
.controls .min::before { left: 18px; top: 9px; width: 10px; height: 1px; background: currentColor; }
.controls .max::before { left: 18px; top: 7px; width: 8px; height: 8px; border: 1px solid; }
.controls .max::after { left: 20px; top: 5px; width: 8px; height: 8px; border: 1px solid; border-width: 1px 1px 0 0; }
.controls .single::before { width: 10px; height: 10px; top: 5px; }
.controls .single::after { display: none; }
.controls .close::before, .controls .close::after { left: 16px; top: 9px; width: 14px; height: 1px; background: currentColor; transform: rotate(45deg); }
.controls .close::after { transform: rotate(-45deg); }

.modelsim { width: 100%; min-width: 1920px; background: var(--face); display: flex; flex-direction: column; }
.modelsim.full { height: 915px; flex: none; }
.modelsim .menu { height: 21px; border-bottom: 1px solid #e4e4e4; padding-left: 1px; }
.modelsim .menu button { padding: 0 7px 0 6px; }
.modelsim .controls { margin: 0 3px 4px auto; }

/* toolbars */
.toolbars { background: var(--face); border-top: 1px solid #999; height: 65px; overflow: hidden; }
.trow { display: flex; height: 32px; }
.group { position: relative; display: flex; align-items: center; height: 31px; padding: 0 6px 2px 12px; border: 1px solid var(--line); border-width: 0 1px 1px 0; box-shadow: 1px 1px 0 #fff; white-space: nowrap; }
.group::before { content: ""; position: absolute; left: 4px; top: 3px; bottom: 2px; border-right: 1px solid var(--line); }
.tb { width: 22px; height: 22px; display: grid; place-items: center; }
.tb.raised, .tb.sunk { width: 20px; margin: 0 3px; height: 20px; border: 1px solid; border-color: #fff var(--line) var(--line) #fff; }
.tb.sunk { background: #fff; border-color: #888 #ddd #ddd #888; }
.tb.dis svg { opacity: .5; }
.caret { width: 8px; display: grid; place-items: center; }
.tsep { width: 11px; height: 16px; background: repeating-linear-gradient(#444 0 1px, transparent 1px 3px) center / 1px 100% no-repeat; }
.time { width: 64px; height: 19px; margin-left: 4px; border: 1px solid; border-color: #777 #fff #fff #777; font: 12px var(--mono); text-align: right; padding: 0 4px; background: #fff; }
.spin { display: flex; flex-direction: column; width: 12px; margin-right: 5px; }
.spin button { height: 9px; font-size: 6px; line-height: 8px; border: 1px solid; border-color: #fff #777 #777 #fff; }
.layout-label { margin: 0 5px 2px 4px; }
.pick { position: relative; display: flex; margin-right: 4px; }
.pick select { appearance: none; width: 142px; height: 20px; border: 1px solid; border-color: #777 #fff #fff #777; border-radius: 0; background: var(--face); font: 12px var(--mono); padding: 0 20px 0 2px; color: #000; }
.pick::after { content: "▼"; position: absolute; right: 0; top: 1px; width: 17px; height: 18px; font-size: 10px; line-height: 18px; text-align: center; background: var(--face); border: 1px solid; border-color: #fff #666 #666 #fff; pointer-events: none; }
.search-label { color: #888; margin: 0 5px 0 6px; }
.search { width: 117px; height: 19px; border: 1px solid; border-color: #777 #fff #fff #777; background: var(--face); }
.sdrop { width: 16px; height: 17px; margin: 0 3px; border: 1px solid; border-color: #fff #666 #666 #fff; display: grid; place-items: center; color: #555; }
.gapfill { width: 518px; }

/* docked panes */
.panes { display: grid; grid-template-columns: 522px 380px minmax(0, 1fr); column-gap: 7px; height: 746px; flex: none; padding-right: 2px; background: #cdcdcd; }
.simcol, .midcol { display: flex; flex-direction: column; min-height: 0; min-width: 0; }
.midcol { gap: 7px; }
.pane { border: 1px solid #999; background: var(--face); padding: 1px; display: flex; flex-direction: column; min-width: 0; min-height: 0; }
.simpane { flex: 1; }
.objpane { height: 373px; }
.procpane { flex: 1; }
.ptitle { display: flex; align-items: center; gap: 3px; height: 18px; padding-right: 2px; white-space: nowrap; flex: none; }
.ptitle span { margin-right: 4px; }
.ridge { flex: 1; height: 7px; border: 1px solid var(--line); border-width: 1px 0; box-shadow: inset 0 1px #fff, 0 1px #fff; border-right: 1px solid var(--line); }
.grip { width: 14px; height: 8px; margin: 0 -2px; background: repeating-conic-gradient(#444 0 25%, #fff 0 50%) 0 0 / 4px 4px; opacity: .7; }
.ptitle button { width: 12px; height: 14px; margin-left: 1px; font: bold 12px/12px var(--ui); border: 1px solid; border-color: #fff #888 #888 #fff; background: var(--face); }
.active > .ptitle { background: #99b4d1; }
.active .ridge { border-color: #000; box-shadow: inset 0 1px #c8ecfa, 0 -1px #c8ecfa; }
.body { flex: 1; position: relative; background: #fff; overflow: hidden; border-top: 1px solid #888; min-height: 0; }
.objpane .body { background: #515b8b; }
.procpane .body { background: #8aa2ff; }

.grid { table-layout: fixed; border-collapse: separate; border-spacing: 0; width: max-content; }
.grid th, .grid td { padding: 0 0 0 2px; text-align: left; font-weight: normal; overflow: hidden; white-space: nowrap; height: 16px; line-height: 15px; }
.grid th { height: 17px; background: var(--face); border: 1px solid; border-color: #fff #777 #777 #fff; }
.grid thead::after { content: ""; display: block; height: 2px; }
.grid .tri::before { content: ""; display: inline-block; border: 4px solid transparent; border-top: 7px solid #444; border-bottom: 0; margin-right: 3px; }
.grid .n { display: flex; align-items: center; }
.grid .n .icon { width: 14px; height: 15px; margin-right: 6px; }
.pm { width: 10px; height: 11px; border: 1px solid #777; border-radius: 1px; background: #fff; color: #000; display: inline-grid; place-items: center; font: bold 10px/8px var(--ui); flex: none; }
.pm + i { width: 5px; height: 1px; background: #888; flex: none; }
.nopm { width: 15px; flex: none; }
.in1 { padding-left: 18px; }
.grid .hl td { background: #bfccd9; }
.obj tbody td { background: #bfccd9; border-bottom: 1px solid #515b8b; line-height: 15px; }
.obj th:last-child { border-right: 0; }
.proc tbody td { color: #fff; }
.nowbox { position: absolute; right: 0; top: 1px; display: flex; align-items: center; gap: 4px; height: 14px; padding: 0 4px; background: #e6ece4; border: 1px solid #999; font: 11px/12px var(--mono); color: #777; }
.nowbox em { width: 8px; height: 8px; background: #f28a00; border: 1px solid #842; }
.nowbox b { border: 5px solid transparent; border-left-color: #000; border-right: 0; }

.hs { display: flex; height: 18px; padding-top: 2px; flex: none; background: #fff; }
.hs button, .vs button { width: 16px; height: 16px; background: var(--face); border: 1px solid; border-color: #fff #666 #666 #fff; font-size: 11px; line-height: 12px; flex: none; }
.track { flex: 1; background: #f8f8f8; display: block; }
.track i { display: block; height: 16px; background: var(--face); border: 1px solid; border-color: #fff #666 #666 #fff; }
.vs { background: #f8f8f8; border: 1px solid #999; border-width: 1px 0 0 1px; display: flex; flex-direction: column; justify-content: space-between; }
.vs button { font-size: 8px; }
.tabs { display: flex; height: 23px; border-top: 2px solid #000; background: var(--face); }
.tabs > button { display: flex; align-items: center; gap: 3px; height: 20px; padding: 0 3px; background: #cfcfcf; border: 1px solid #000; border-width: 0 1px 1px 0; border-radius: 0 0 3px 3px; }
.tabs .on { background: var(--face); }
.tabs b { color: #aaa; font-size: 13px; margin-left: 2px; }
.tabnav { margin-left: auto; }
.tabnav button { width: 10px; height: 15px; font-size: 10px; line-height: 12px; border: 1px solid; border-color: #fff #666 #666 #fff; }

/* wave viewer */
.wave { flex: 1; display: grid; grid-template-columns: 322px 43px minmax(0, 1fr) 20px; grid-template-rows: 20px minmax(0, 1fr); border-top: 2px solid #999; min-height: 0; background: #808080; }
.wave.foot { grid-template-rows: 20px minmax(0, 1fr) 40px 19px; }
.wave > * { border-right: 2px solid #fff; border-bottom: 2px solid #fff; overflow: hidden; min-width: 0; }
.wave > .last { border-right: 0; }
.whead { display: flex; align-items: center; padding-left: 10px; gap: 3px; color: #fff; }
.whead .drop { color: #000; }
.whead.msg { justify-content: flex-end; padding: 0 6px 0 0; }
.blk { background: #000; }
.names { border-left: 8px solid #fff; padding-top: 3px; }
.vals { padding-top: 3px; }
.names li, .vals li { display: flex; align-items: center; height: 17px; border-bottom: 1px solid #808080; background: #fff; line-height: 16px; }
.names li { padding-left: 4px; }
.vals li { padding-left: 2px; }
.names .icon { margin-right: 4px; }
.quad .names, .quad .vals { padding-top: 0; }
.quad .names ul, .quad .vals ul { margin-top: -9px; }
.black li { background: #000; color: #fff; }
.black li.bit { background: #808080; }
.names li.bit { padding-left: 22px; }
.names li.bit::before { content: ""; width: 9px; height: 17px; margin-left: 5px; margin-top: -17px; border-left: 1px solid #ccc; border-bottom: 1px solid #ccc; flex: none; margin-right: 0; }
.names li.bit .nopm { display: none; }
.names ul::after, .black .vals ul::after { content: ""; display: block; margin: 0 4px 0 2px; border-top: 1px solid #000; }
.names .pm + i { background: #888; }
.black .names .pm + i { background: #ccc; }
.trace { background: #000; }
.trace svg text { font: 11px var(--ui); }
.quad { height: 142px; }
.quad .vs, .white .vs { background: #fff; }
.sliver { height: 5px; overflow: hidden; margin-left: 10px; }
.bare { grid-template-rows: 17px; border-top: 0; margin-top: -5px; }
.bare .names, .bare .vals { padding-top: 0; }

.fnames { display: grid; grid-template-rows: 1fr 1fr; color: #fff; }
.fnames div { display: flex; align-items: center; justify-content: space-between; padding: 0 10px 0 8px; }
.fnames .ics { display: flex; padding: 0; }
.fnames .ics .icon { width: 13px; height: 13px; }
.fnames .cur { background: linear-gradient(90deg, #808080 48px, #fff 48px); color: #000; }
.fvals { display: grid; grid-template-rows: 1fr 1fr; color: #fff; text-align: right; line-height: 19px; }
.fvals div { margin-left: -10px; padding-right: 8px; white-space: nowrap; }
.fvals .cur { background: #fff; color: #000; }
.wave > .hs { background: #808080; padding-top: 1px; border-bottom: 1px solid #fff; }
.wave > .hs.n { padding-left: 8px; }
.wave > .hs button { color: #999; }
.wave > .hs.t button { color: #000; }
.hs.t .track { background: #c6c6c6; }

.findbar { display: flex; align-items: center; height: 31px; padding: 0 4px 3px 2px; gap: 2px; border-top: 1px solid #fff; }
.findbar .x { width: 14px; height: 15px; font-size: 11px; line-height: 12px; border: 1px solid; border-color: #fff #666 #666 #fff; }
.findbox { flex: 1; display: flex; align-items: center; height: 20px; margin-left: 4px; padding-left: 3px; background: #fff; border: 1px solid; border-color: #777 #fff #fff #777; }
.findbox input { flex: 1; border: 0; outline: 0; background: none; }
.box { width: 20px; height: 20px; display: grid; place-items: center; border: 1px solid; border-color: #fff #777 #777 #fff; margin-left: 2px; }
.vsep { width: 1px; height: 16px; margin: 0 6px; border-left: 1px dotted #333; }
.searchfor { display: flex; align-items: center; gap: 7px; }
.searchfor .drop { border-width: 6px 4px 0; }
.findbar input[type=checkbox] { appearance: none; width: 12px; height: 12px; margin: 0 3px 0 9px; background: #fff; border: 1px solid; border-color: #777 #ddd #ddd #777; }
.findbar input:checked::after { content: "✓"; display: block; font: bold 11px/10px "DejaVu Sans", sans-serif; }
.transcript { margin-top: 7px; flex: 1; border-right: 0; overflow: hidden; }
.transcript .ptitle { padding-right: 6px; }
.log { flex: 1; display: flex; border-top: 2px solid #000; border-left: 1px solid #000; margin-left: 2px; background: #fff; overflow: hidden; }
.log pre { flex: 1; font: 12px/15px var(--mono); padding: 2px; }
.log b { font: 10px/15px var(--mono); color: #000090; }
.log .vs { width: 20px; }

/* paint */
.paint { font: 12px/16px var(--seg); color: #444; }
.paint-title { display: flex; align-items: center; height: 29px; color: #999; flex: none; }
.bar { width: 1px; height: 16px; background: #888; margin: 0 0 0 6px; }
.paint-title .flat { margin-left: 11px; }
.paint-title .bar + .flat { margin-left: 14px; }
.paint-title > .drop { color: #333; margin: 2px 0 0 11px; border-top-width: 4px; }
.paint-title .drop + .bar { margin: 0 7px 0 14px; }
.paint-title h2 { font-size: 13px; line-height: 20px; color: #999; }
.paint-controls button { width: 59px; }
.paint-tabs { display: flex; height: 28px; flex: none; align-items: stretch; border-bottom: 1px solid #dadbdc; }
.paint-tabs > button { width: 62px; }
.paint-tabs .file { background: #1979ca; color: #fff; width: 70px; margin-bottom: -1px; }
.paint-tabs .on { width: 69px; border: 1px solid #dadbdc; border-bottom: 0; background: #f5f6f7; margin-bottom: -1px; }
.fold { margin: 12px 11px 0 auto; width: 8px; height: 8px; border: 1px solid #888; border-width: 1px 0 0 1px; transform: rotate(45deg); }
.paint-tabs .qm { width: 19px; height: 19px; margin: 4px 4px 0 0; border-radius: 50%; background: #0b74cc; color: #fff; font-weight: bold; }
.ribbon { display: flex; height: 114px; flex: none; background: #f5f6f7; border-bottom: 1px solid #d4d6d8; padding-top: 3px; }
.rg { position: relative; display: flex; flex-direction: column; border-right: 1px solid #e2e3e4; margin-bottom: 4px; }
.rb { display: flex; height: 90px; padding-top: 2px; }
.rg h3 { text-align: center; color: #5f6368; margin-top: 2px; font-size: 12px; }
.clip { width: 125px; }
.image { width: 140px; }
.tools { width: 96px; }
.brushes { width: 63px; }
.shapes { width: 285px; }
.size { width: 62px; }
.colors { width: 435px; }
.p3d { width: 66px; }
.big { display: flex; flex-direction: column; align-items: center; width: 62px; height: 82px; line-height: 17px; flex: none; padding-top: 3px; }
.big .drop { margin-top: 4px; }
.paste { width: 31px; height: 38px; margin-bottom: 6px; }
.tile { width: 38px; height: 38px; margin-bottom: 6px; border: 1px solid #aaa; background: #fff; }
.small { display: flex; flex-direction: column; }
.small button { display: flex; align-items: center; gap: 4px; height: 26px; white-space: nowrap; }
.off { color: #8f8f8f; }
.off .drop { opacity: .8; }
.sel { width: 50px; margin: 0 4px; padding: 0; background: #c9e0f7; border: 1px solid #62a2e4; }
.half { width: 100%; height: 45px; border-bottom: 1px solid #62a2e4; display: grid; place-items: center; margin-bottom: 1px; }
.selbox { width: 36px; height: 28px; }
.toolgrid { display: grid; grid-template-columns: repeat(3, 28px); grid-template-rows: 36px 36px; padding: 7px 0 0 6px; }
.toolgrid button { display: grid; place-items: center; }
.gallery { display: grid; grid-template-columns: repeat(7, 24px); grid-auto-rows: 24px; width: 170px; height: 75px; margin: 3px 0 0 5px; border: 1px solid #dcdfe2; background: #fbfcfd; }
.gallery svg { width: 22px; height: 20px; margin: 2px 1px; fill: #eef5fb; stroke: #35719f; }
.gscroll { width: 18px; height: 75px; margin: 3px 10px 0 0; border: 1px solid #dcdfe2; display: flex; flex-direction: column; align-items: center; justify-content: space-around; }
.gscroll .up { border: 3px solid transparent; border-bottom: 4px solid #aaa; border-top: 0; }
.size .big { width: 61px; }
.lines { width: 41px; height: 37px; margin-bottom: 7px; display: flex; flex-direction: column; justify-content: space-between; }
.lines i { background: #7a90b4; height: 1px; }
.lines i:nth-child(2) { height: 3px; }
.lines i:nth-child(3) { height: 5px; }
.lines i:nth-child(4) { height: 8px; }
.sw { border: 1px solid #888; padding: 2px; background: #000 content-box; width: 37px; height: 38px; margin-bottom: 6px; }
.c1 { width: 50px; margin-left: 5px; background: #c9e0f7; border: 1px solid #62a2e4; }
.c2 { width: 50px; }
.c2 .sw { width: 30px; height: 30px; margin: 4px 0 10px; background-color: #fff; }
.palette { display: grid; grid-template-columns: repeat(10, 25px); grid-auto-rows: 25px; gap: 2px; margin: 1px 0 0 1px; }
.palette i { border: 1px solid #a0a0a0; padding: 1px; background-clip: content-box; }
.ec { width: 52px; }

.canvas { display: flex; flex: 1; min-height: 0; }
.view { flex: 1; min-width: 0; min-height: 0; overflow: hidden; padding: 5px 0 0 5px; background: #c9d3e4; font: 11px/16px var(--ui); color: #000; }
.bottom-right .view { padding-top: 0; }
.pscroll { width: 20px; background: var(--face); display: flex; flex-direction: column; align-items: center; }
.pscroll i { width: 7px; height: 7px; margin: 9px 0 5px; border: 2px solid #555; border-width: 2px 0 0 2px; transform: rotate(45deg); flex: none; }
.pscroll b { flex: 1; width: 20px; background: #cdcdcd; }
.low b { margin-top: 208px; }
```
FILE: script.js
```js
const icon = n => `<svg class="icon"><use href="#i-${n}"/></svg>`;

// ---- toolbars: "+" raised, "-" pressed, "v" drop caret, "|" separator ----
const STD = "new v open save refresh print | cut copy paste undo redo | plus v find tree";
const SIM = "+link up left right | restart TIME run cont runall break stop | +perf +perf hand";
const ANALYZE = "compile help project sim break";
const STEP = "bdown bover bup | cdown v cover v cup";
const VIRT = "vadd v vdel v vedit vsave v vgo";
const MODE = "-arrow +zoommode +pan +twocur +edit | traffic";
const CURS = "curadd curdel prev next fallp falln risep risen";
const VIEW = "-w1 +w2 +w3 | w4 w5 w6 w7";
const SETS = {
  wave: [[STD, ANALYZE, SIM, STEP, VIRT, MODE, CURS],
         ["drv v rdr v expand | SEARCH findgray findgray clean", "zin zout zfull zcur zcur zsel", VIEW]],
  modelsim: [[STD + " m", SIM, "+gearred -gearyellow +gearyellow +geargreen", "xleft xright +report xgrid", ANALYZE, STEP, "LAYOUT", VIRT],
             ["-in -out -io -int +all clean", MODE, CURS, "GAP", VIEW]]
};
let uid = 0;
const SPECIAL = {
  "|": () => '<i class="tsep"></i>',
  v: () => '<span class="caret"><i class="drop"></i></span>',
  TIME: () => '<input class="time" aria-label="Run length" value="100 ps"><span class="spin"><button>▲</button><button>▼</button></span>',
  LAYOUT: () => { const id = "layout" + uid++; return `<label class="layout-label" for="${id}">Layout</label><span class="pick"><select id="${id}"><option>Simulate</option></select></span>`; },
  SEARCH: () => '<label class="search-label" for="wsearch">Search:</label><input id="wsearch" class="search" disabled><button class="sdrop" aria-label="Search history"><i class="drop"></i></button>'
};
document.querySelectorAll(".toolbars").forEach(el => {
  const off = (el.dataset.disabled || "").split(" ");
  const item = t => {
    if (SPECIAL[t]) return SPECIAL[t]();
    const kind = t[0] === "+" ? " raised" : t[0] === "-" ? " sunk" : "";
    const name = t.replace(/^[+-]/, "");
    return `<button class="tb${kind}${off.includes(name) ? " dis" : ""}" aria-label="${name}">${icon(name)}</button>`;
  };
  el.innerHTML = SETS[el.dataset.set].map(row => `<div class="trow">${row.map(g =>
    g === "GAP" ? '<div class="gapfill"></div>' : `<div class="group">${g.split(" ").map(item).join("")}</div>`).join("")}</div>`).join("");
});

document.querySelectorAll("[data-menu]").forEach(el => {
  el.innerHTML = el.dataset.menu.split(",").map(m => `<button>${m}</button>`).join("");
});
document.querySelectorAll(".ptitle").forEach(el => {
  el.innerHTML = `${icon(el.dataset.icon)}<span>${el.dataset.title}</span><i class="ridge"></i><i class="grip"></i><i class="ridge"></i><button>+</button><button>↗</button><button>×</button>`;
});

// ---- tables ----
const sig = (n, v, pm) => [{ t: n, i: "sig", pm }, v, "Signal", "Internal"];
const pkg = (n, d) => [{ t: n, i: "du" }, d || n, "Package", "Package", "+acc"];
const SIMH = { cols: [236, 71, 96, 96, 60], head: ["Instance", "Design unit", "Design unit type", "Top Category", "Visibility"] };
const OBJH = { cols: [189, 44, 38, 44, 62], head: ["Name", "Value", "Kind", "Mode", ""] };
const PROCH = { cols: [147, 105, 58, 43, 60], head: ["Name", "Type (filtered)", "State", "Order", "Parent Path"] };
const TABLES = {
  "route-sim": { ...SIMH, hl: 0, rows: [
    [{ t: "tb_mdtssiroute", i: "du", pm: "−" }, "tb_mdtssir...", "Architecture", "DU Instance", "+acc"],
    [{ t: "DUT", i: "du", pm: "+", in: 1 }, "mdtssirout...", "Architecture", "DU Instance", "+acc"],
    [{ t: "line__52", i: "proc", in: 1 }, "tb_mdtssir...", "Process", "-", "+acc"],
    pkg("standard"), pkg("textio"), pkg("std_logic_1164", "std_logic_1..."), pkg("std_logic_arith", "std_logic_a..."), pkg("std_logic_unsigned", "std_logic_u...")] },
  "top-sim": { ...SIMH, hl: 0, rows: [
    [{ t: "tb_mdttopsimp", i: "du", pm: "−" }, "tb_mdttops...", "Architecture", "DU Instance", "+acc"],
    [{ t: "stim_proc", i: "proc", in: 1 }, "tb_mdttops...", "Process", "-", "+acc"],
    pkg("standard"), pkg("textio"), pkg("std_logic_1164", "std_logic_1...")] },
  "route-obj": { ...OBJH, rows: [sig("SSISelect", "11", "+"), sig("M_AX0_INT_CLK", "0"), sig("M_AX1_INT_CLK", "0"), sig("M_AX0_SSI_CLK", "0"), sig("M_AX1_SSI_CLK", "0"), sig("M_AX0_MDT_INT", "1"), sig("M_AX1_MDT_INT", "1")] },
  "top-obj": { ...OBJH, rows: [sig("H1_CLK", "0"), sig("H1_CLK90", "0"), sig("M_RET_DATA", "1"), sig("SynchedTick60", "1"), sig("intDataValid", "0"), sig("RisingACountEnablePipe", "0"), sig("RisingACountDisablePipe", "0"), sig("LeadingCountDecode", "00", "+"), sig("TrailingCountDecode", "00", "+"), sig("CountRA", "0000...", "+")] },
  "route-proc": { ...PROCH, rows: [[{ t: "line__52", i: "proc" }, "VHDL Process", "Done", "-", "/tb_mdtssiroute"]] },
  "top-proc": { ...PROCH, rows: [[{ t: "stim_proc", i: "proc" }, "VHDL Process", "Wait", "-", "/tb_mdttopsimp"]] }
};
const pmBox = pm => pm ? `<span class="pm">${pm}</span><i></i>` : '<i class="nopm"></i>';
document.querySelectorAll("[data-table]").forEach(el => {
  const d = TABLES[el.dataset.table];
  const cell = c => typeof c === "string" ? `<td>${c}</td>` : `<td><div class="n${c.in ? " in1" : ""}">${pmBox(c.pm)}${icon(c.i)}${c.t}</div></td>`;
  el.style.width = d.cols.reduce((a, b) => a + b) + "px";
  el.innerHTML = `<colgroup>${d.cols.map(w => `<col style="width:${w}px">`).join("")}</colgroup>` +
    `<thead><tr>${d.head.map((h, i) => `<th${i ? "" : ' class="tri"'}>${h}</th>`).join("")}</tr></thead>` +
    `<tbody>${d.rows.map((r, i) => `<tr${d.hl === i ? ' class="hl"' : ""}>${r.map(cell).join("")}</tr>`).join("")}</tbody>`;
});

// ---- waveforms ----
const U = 11.7, ROW = 17;
const repeat = (a, b) => [-1, 0, 1, 2, 3].flatMap(k => [a + 13 * k, b + 13 * k]).filter(t => t > -4 && t < 45);
const bit = (name, edges, start = 0, val = "0") => ({ name, val, edges, start });
const quad = ["Exp0Quad_B", "Exp0Quad_Reg", "Exp0Quad_FaultA", "Exp0Quad_FaultB", "Exp1Quad_A", "Exp1Quad_B", "Exp1Quad_Reg", "Exp1Quad_FaultA"].map(n => ({ name: "/tb_quad/" + n, val: "U", x: 1 }));
const R = "/tb_mdtssiroute/", T = "/tb_mdttopsimp/";
const sub = (n, edges, start) => ({ name: `(${n})`, val: "0", sub: 1, edges, start: start || 0 });
const pulse = repeat(12, 13);
const WAVES = {
  quad: { rows: quad, y: -9, origin: 4, end: 49, grid: 51, lines: 26, vs: 1 },
  sliver: { rows: quad.slice(-1), y: 0, origin: 4, end: 49, grid: 51, lines: 26, vs: 1, bare: 1 },
  route: { origin: 4, y: 3, end: 52, grid: 61.5, lines: 10, vs: 1, foot: 1, cursor: 1, rows: [
    { name: R + "SSISelect", val: "00", pm: "+", edges: [1, 2, 3], labels: ["", "", "", "11"] },
    bit(R + "M_AX0_INT_CLK", [1, 2, 3], 1, "1"), bit(R + "M_AX1_INT_CLK", [2], 1, "1"),
    bit(R + "M_AX0_SSI_CLK", []), bit(R + "M_AX1_SSI_CLK", []),
    bit(R + "M_AX0_MDT_INT", [], 1, "1"), bit(R + "M_AX1_MDT_INT", [], 1, "1")] },
  top: { origin: 51, y: 3, start: -4, end: 45, grid: 51, lines: 10, rows: [
    bit(T + "H1_CLK", repeat(1, 2)), bit(T + "H1_CLK90", repeat(3, 4)),
    bit(T + "M_RET_DATA", [0, 5, 13, 18, 26, 31, 39, 44], 1), bit(T + "SynchedTick60", [0, 6, 13, 19, 26, 32, 39], 1),
    bit(T + "intDataValid", [0, 7, 13, 20, 26, 33, 39], 1), bit(T + "RisingACountEnablePipe", [0, 8, 13, 21, 26, 34, 39], 1),
    bit(T + "RisingACountDisablePipe", [0, 9, 13, 22, 26, 35, 39], 1),
    { name: T + "LeadingCountDecode", val: "00", pm: "−", edges: repeat(10, 13), labels: ["", "11", "00", "11", "00", "11", "00", "11", "00"] },
    sub(1, repeat(10, 13)), sub(0, repeat(10, 13)),
    { name: T + "TrailingCountDecode", val: "00", pm: "−", edges: repeat(11, 13), labels: ["00", "10", "00", "10", "00", "10", "00", "10", "00"] },
    sub(1, repeat(11, 13)), sub(0, []),
    { name: T + "CountRA", val: "0000...", pm: "−", edges: pulse, labels: ["00...", "", "000000000000000000", "", "000000000000000000", "", "000000000000000000", "", "00000000..."] },
    ...Array.from({ length: 18 }, (_, i) => sub(17 - i, pulse))] }
};
function trace(w) {
  const X = t => Math.round(w.origin + t * U) + .5, s = w.start || 0;
  let out = "";
  for (let i = 0; i < w.lines; i++) { const x = Math.round(w.grid + i * 58.5) + .5; out += `<path d="M${x} 0V1000" stroke="#8a8a8a"/>`; }
  w.rows.forEach((r, i) => {
    const top = w.y + i * ROW, hi = top + 1.5, lo = top + 13.5;
    if (r.x) { out += `<path d="M${X(s)} ${top + 7.5}H${X(w.end)}" stroke="#f00"/>`; return; }
    if (r.labels) {
      let d = "";
      const pts = [s, ...r.edges, w.end];
      for (let k = 0; k < pts.length - 1; k++) {
        const a = X(pts[k]) + (k ? 2 : 0), b = X(pts[k + 1]) - (k < pts.length - 2 ? 2 : 0), last = k === pts.length - 2;
        d += `M${a} ${hi}H${b}M${a} ${lo}H${b}`;
        if (!last) d += `M${b} ${hi}L${b + 4} ${lo}M${b} ${lo}L${b + 4} ${hi}`;
        if (r.labels[k]) out += `<text x="${a + 3}" y="${top + 12}" fill="#fff">${r.labels[k]}</text>`;
      }
      out += `<path d="${d}" stroke="#a8f8a0" fill="none"/>`; return;
    }
    let v = r.start, d = `M${X(s)} ${v ? hi : lo}`;
    r.edges.forEach(t => { v = 1 - v; d += `H${X(t)}V${v ? hi : lo}`; });
    out += `<path d="${d}H${X(w.end)}" stroke="#28f020" fill="none"/>`;
  });
  if (w.cursor) out += '<path d="M5 0V1000" stroke="#ffc800" stroke-width="2"/>';
  return `<svg width="1600" height="900">${out}</svg>`;
}
function timeline() {
  let d = "", t = "";
  for (let i = 1; i < 52; i++) {
    for (let h = 0; h < 2; h++) { const x = Math.round(4 + i * U + h * U / 2) + .5; d += `M${x} ${!h && i % 5 === 0 ? 0 : 3}V7`; }
    if (i % 10 === 0) t += `<text x="${4 + i * U}" y="20" text-anchor="middle" fill="#28f020">${i * 10} ns</text>`;
  }
  return `<svg width="620" height="40"><path d="${d}" stroke="#28f020"/><text x="10" y="20" fill="#28f020">ns</text>${t}` +
    '<path d="M4 21.500H608" stroke="#999"/><path d="M5 0V22" stroke="#ffc800" stroke-width="2"/><path d="M4.500 22.500h41v14h-41z" stroke="#ffc800" fill="none"/><text x="7" y="33" fill="#ffc800">0.00 ns</text></svg>';
}
document.querySelectorAll("[data-wave]").forEach(el => {
  const w = WAVES[el.dataset.wave];
  const head = w.bare ? "" : `<div class="whead">${icon("objects")}<i class="drop"></i></div><div class="whead msg">Msgs</div><div class="blk"></div><div class="last"></div>`;
  const up = w.vs && !w.bare ? "<button>▲</button>" : "";
  let h = head +
    `<div class="names"><ul>${w.rows.map(r => `<li${r.sub ? ' class="bit"' : ""}>${pmBox(r.pm)}${icon("sig")}${r.name}</li>`).join("")}</ul></div>` +
    `<div class="vals"><ul>${w.rows.map(r => `<li${r.sub ? ' class="bit"' : ""}>${r.val}</li>`).join("")}</ul></div>` +
    `<div class="trace">${trace(w)}</div><div class="last${w.vs ? " vs" : ""}">${up}${w.foot ? "<button>▼</button>" : ""}</div>`;
  if (w.foot) {
    el.classList.add("foot");
    h += `<div class="fnames"><div><span class="ics">${icon("find")}${icon("note")}${icon("plus")}</span>Now</div><div class="cur"><span class="ics">${icon("lock")}${icon("wrench")}${icon("minus")}</span>Cursor 1</div></div>` +
      `<div class="fvals"><div>500 ns</div><div class="cur">.00 ns</div></div><div class="blk">${timeline()}</div><div class="last"></div>` +
      '<div class="hs n"><button>◂</button><span class="track"></span><button>▸</button></div><div class="hs"><button>◂</button><span class="track"></span><button>▸</button></div>' +
      '<div class="hs t"><button>◂</button><span class="track"><i style="width:9%"></i></span><button>▸</button></div><div class="last"></div>';
  }
  el.innerHTML = h;
});

// ---- paint windows ----
const SHAPES = ["M2 2l17 15", "M2 16C6-2 10 2 10 9s5 8 9-7", "M11 1a9 9 0 1 0 .1 0z", "M2 1h17v17H2z", "M6 1h9q4 0 4 4v9q0 4-4 4H6q-4 0-4-4V5q0-4 4-4z", "M8 2h9l-2 7h4v9H2z", "M11 1l8 17H2z",
  "M2 1v17h16z", "M11 1l7 9-7 9-7-9z", "M11 1l9 7-4 10H6L2 8z", "M11 1l8 5v8l-8 5-8-5V6z", "M2 6h8V1l9 9-9 9v-5H2z", "M19 6h-8V1l-9 9 9 9v-5h8z", "M6 19v-9H2l9-9 9 9h-4v9z",
  "M6 1v9H2l9 9 9-9h-4V1z", "M11 1l2 7 7 2-7 2-2 7-2-7-7-2 7-2z", "M11 1l2 6h7l-5 4 2 7-6-4-6 4 2-7-5-4h7z", "M11 1l3 5h6l-3 4 3 4h-6l-3 5-3-5H2l3-4-3-4h6z", "M4 1h13q2 0 2 2v9q0 2-2 2h-7l-4 5v-5H4q-2 0-2-2V3q0-2 2-2z", "M11 1c12 0 12 13 0 13l-5 5v-6C-1 9 2 1 11 1z", "M7 2q4-3 8 0 5 1 4 6 3 5-2 7l-7 1-6 3 1-4q-5-2-2-7-1-5 4-6z"];
const COLORS = ["#000", "#7f7f7f", "#880015", "#ed1c24", "#ff7f27", "#fff200", "#22b14c", "#00a2e8", "#3f48cc", "#a349a4",
  "#fff", "#c3c3c3", "#b97a57", "#ffaec9", "#ffc90e", "#efe4b0", "#b5e61d", "#99d9ea", "#7092be", "#c8bfe7", ...Array(10).fill("transparent")];
document.querySelectorAll(".paint").forEach(el => {
  const f = document.getElementById("paint-frame").content.cloneNode(true);
  f.querySelector("h2").textContent = el.dataset.title;
  f.querySelector(".gallery").innerHTML = SHAPES.map(d => `<svg viewBox="0 0 22 20"><path d="${d}"/></svg>`).join("");
  f.querySelector(".palette").innerHTML = COLORS.map(c => `<i style="background-color:${c}"></i>`).join("");
  el.prepend(f);
});
```
